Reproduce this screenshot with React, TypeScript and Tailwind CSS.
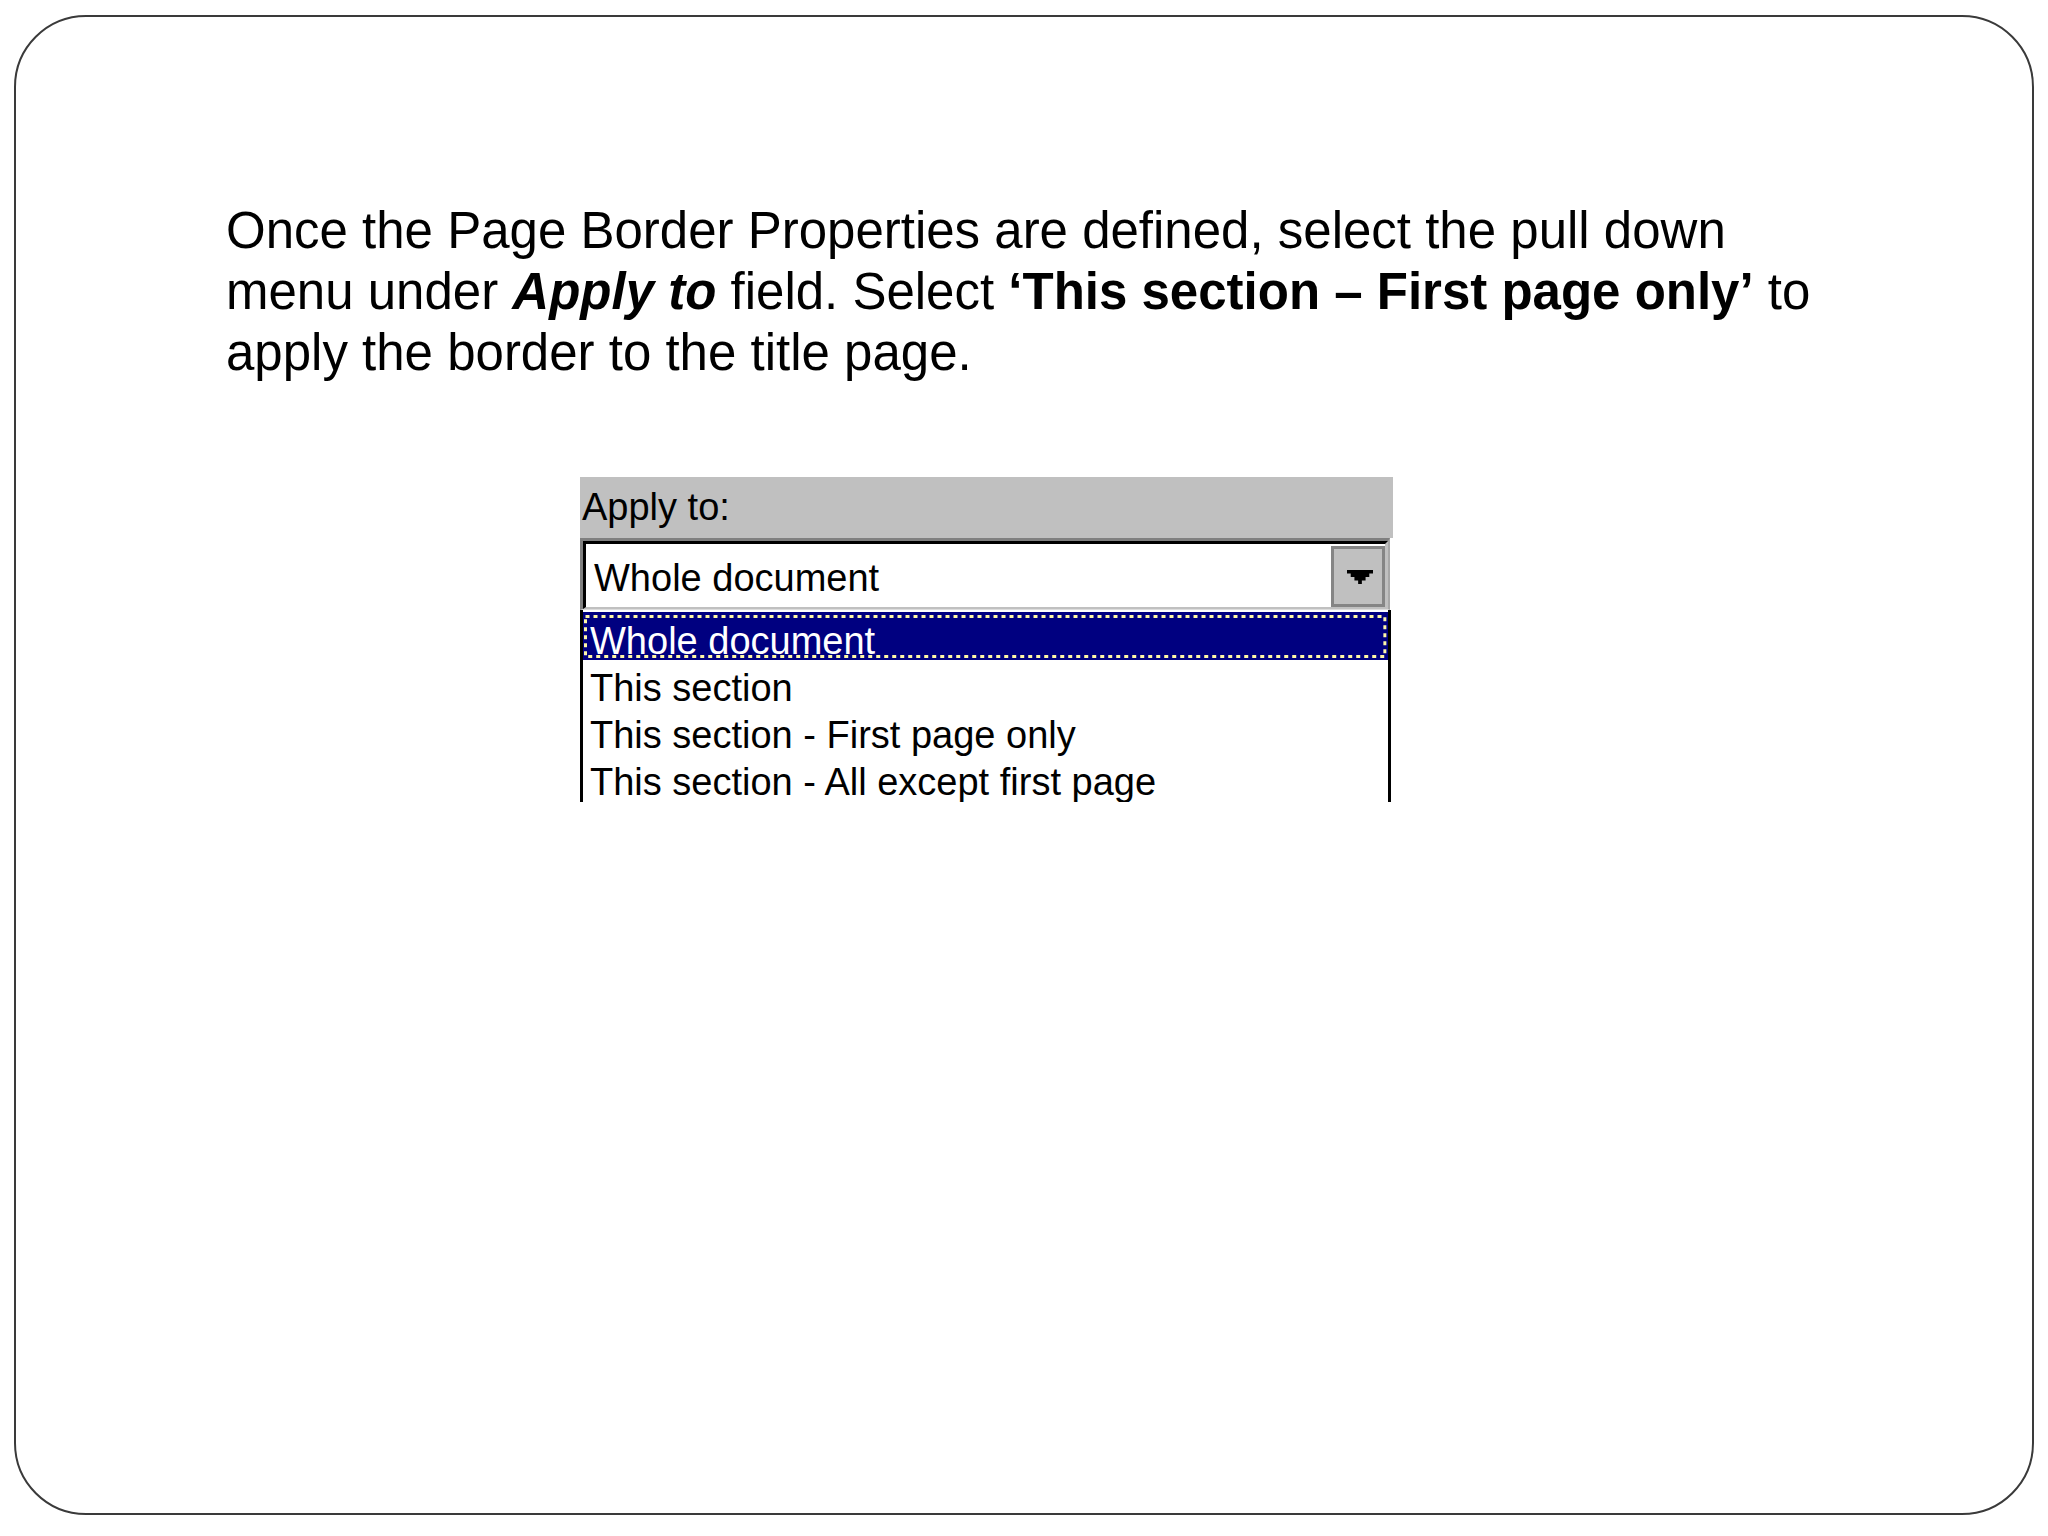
import React from "react"

const options = [
  "This section",
  "This section - First page only",
  "This section - All except first page",
]

function DropArrow() {
  return (
    <svg width="26" height="14" viewBox="0 0 7 4" preserveAspectRatio="none" className="block">
      <path d="M0 0H7V1H6V2H5V3H4V4H3V3H2V2H1V1H0Z" fill="#000" />
    </svg>
  )
}

function ApplyToDropdown() {
  return (
    <div className="w-[813px] font-['Liberation_Sans',Arial,sans-serif] text-[38px] text-black">
      <div className="h-[61px] bg-[#c0c0c0] pl-[2px] leading-[61px]">
        Apply to:
      </div>

      {/* combo box, sunken 3D border */}
      <div className="w-[810px] h-[72px] border-t-[3px] border-l-[3px] border-r-[2px] border-b-[1px] border-t-[#808080] border-l-[#808080] border-r-[#a8a8a8] border-b-[#dcdcdc]">
        <div className="h-full flex bg-white border-t-[3px] border-l-[3px] border-r-[3px] border-b-[2px] border-t-black border-l-black border-r-[#c0c0c0] border-b-[#c0c0c0]">
          <div className="flex-1 pl-[8px] pt-[6px] leading-[57px]">Whole document</div>
          <div className="w-[54px] mt-[2px] bg-[#c0c0c0] border-[3px] border-[#858585] flex items-center justify-center pl-[4px]">
            <DropArrow />
          </div>
        </div>
      </div>

      {/* open list */}
      <div className="w-[811px] h-[192px] overflow-hidden border-x-[3px] border-black pt-[2px]">
        <div className="relative h-[48px] bg-[#000080] text-white pl-[7px] pt-[10px] leading-[38px]">
          Whole document
          <svg className="absolute inset-0 w-full h-full pointer-events-none">
            <rect x="2.5" y="4.5" width="99.3%" height="40" fill="none" stroke="#fff8a6" strokeWidth="3" strokeDasharray="4 4" />
          </svg>
        </div>
        <div className="mt-[5px]">
          {options.map((o) => (
            <div key={o} className="h-[47px] pl-[7px] leading-[47px] whitespace-nowrap">
              {o}
            </div>
          ))}
        </div>
      </div>
    </div>
  )
}

export default function App() {
  return (
    <div className="w-[2048px] h-[1536px] bg-white pt-[15px] pl-[14px]">
      <div className="w-[2020px] h-[1500px] border-2 border-[#3a3a3a] rounded-[72px] pl-[210px] pt-[183px]">
        <p className="font-['Liberation_Sans',Arial,sans-serif] text-[51px] leading-[61px] text-black">
          Once the Page Border Properties are defined, select the pull down
          <br />
          menu under <strong className="font-bold italic">Apply to</strong> field. Select{" "}
          <strong className="font-bold">‘This section – First page only’</strong> to
          <br />
          apply the border to the title page.
        </p>

        <div className="mt-[94px] ml-[354px]">
          <ApplyToDropdown />
        </div>
      </div>
    </div>
  )
}
